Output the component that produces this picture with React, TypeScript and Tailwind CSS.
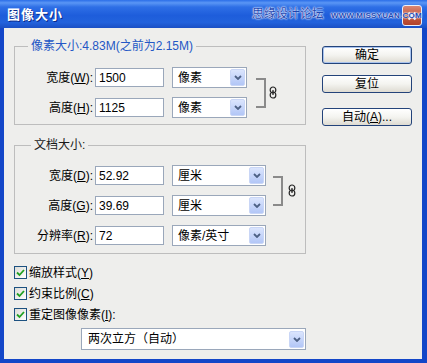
import React from "react";

const FONT = "font-['Liberation_Sans','Noto_Sans_CJK_SC',sans-serif]";

function Chevron() {
  return (
    <svg width="8" height="5" viewBox="0 0 8 5">
      <path d="M1 1 L4 4 L7 1" fill="none" stroke="#4d6185" strokeWidth="1.8" />
    </svg>
  );
}

function Select({ text, className }: { text: string; className: string }) {
  return (
    <div className={"flex items-center bg-white border border-[#9aa7ba] pl-[5px] pr-px " + className}>
      <span className="flex-1 text-[12px] leading-none text-black whitespace-nowrap">{text}</span>
      <span className="w-[15px] h-[17px] rounded-[2px] border border-[#c9d6f6] bg-gradient-to-b from-[#dbe5fd] to-[#b2c6f6] flex items-center justify-center">
        <Chevron />
      </span>
    </div>
  );
}

function Input({ value }: { value: string }) {
  return (
    <div className="w-[69px] h-[19px] bg-white border border-[#9aa7ba] flex items-center pl-[3px] text-[12px] leading-none text-black">
      {value}
    </div>
  );
}

function Row({ label, k, value, unit, selClass }: { label: string; k: string; value: string; unit: string; selClass: string }) {
  return (
    <div className="flex items-center h-[21px]">
      <div className="w-[80px] pr-[2px] text-right text-[12px] leading-none text-black whitespace-nowrap">
        {label}(<u>{k}</u>):
      </div>
      <Input value={value} />
      <Select text={unit} className={selClass} />
    </div>
  );
}

function Chain() {
  return (
    <svg width="8" height="13" viewBox="0 0 8 13">
      <rect x="1.2" y="1" width="5.6" height="6" rx="2.8" fill="none" stroke="#222" strokeWidth="1.2" />
      <rect x="1.2" y="6" width="5.6" height="6" rx="2.8" fill="none" stroke="#222" strokeWidth="1.2" />
      <line x1="4" y1="4" x2="4" y2="9" stroke="#222" strokeWidth="1.2" />
    </svg>
  );
}

function Check({ label, k, suffix }: { label: string; k: string; suffix?: string }) {
  return (
    <div className="flex items-center h-[21px]">
      <span className="w-[13px] h-[13px] border border-[#1c5180] bg-gradient-to-br from-[#dcdcd7] to-white flex items-center justify-center">
        <svg width="9" height="9" viewBox="0 0 9 9">
          <path d="M1 4.5 L3.5 7 L8 2" fill="none" stroke="#21a121" strokeWidth="1.8" />
        </svg>
      </span>
      <span className="ml-[2px] text-[12px] leading-none text-black">
        {label}(<u>{k}</u>){suffix}
      </span>
    </div>
  );
}

function Button({ text, def }: { text: React.ReactNode; def?: boolean }) {
  return (
    <div
      className={
        "h-[18px] w-[90px] rounded-[3px] border border-[#23437a] bg-gradient-to-b from-white via-[#f4f4f0] to-[#dedbd2] flex items-center justify-center text-[12px] leading-none text-black " +
        (def ? "shadow-[inset_0_0_0_1px_#a9c3ee]" : "")
      }
    >
      {text}
    </div>
  );
}

export default function App() {
  return (
    <div className={"w-[427px] h-[363px] flex flex-col bg-[#1346c8] overflow-hidden " + FONT}>
      {/* Title bar */}
      <div className="relative h-[28px] shrink-0 flex items-center pl-[7px] bg-[linear-gradient(to_bottom,#2b6ee8_0%,#5a96f5_10%,#2e6fe6_25%,#1e5ddb_55%,#2262dc_80%,#1a4fc4_100%)]">
        <span className="text-white font-bold text-[13px] tracking-[1px] leading-none [text-shadow:1px_1px_0_#0a2a8a]">图像大小</span>
        <div className="absolute left-[402px] top-[5px] w-[20px] h-[21px] rounded-[3px] border border-white bg-gradient-to-b from-[#ec8a68] via-[#d8582c] to-[#c2401a] flex items-center justify-center opacity-90">
          <svg width="10" height="10" viewBox="0 0 10 10">
            <path d="M1.5 1.5 L8.5 8.5 M8.5 1.5 L1.5 8.5" stroke="white" strokeWidth="2.2" />
          </svg>
        </div>
        <div className="absolute left-[252px] top-[8px] flex items-end whitespace-nowrap">
          <span className="text-[12px] leading-none text-[#1d45b0] [text-shadow:0_0_1px_#ffffff,0_0_2px_#e6efff,0_0_2px_#e6efff]">思缘设计论坛</span>
          <span className="ml-[7px] text-[8px] font-bold leading-none text-[#2148b4] tracking-[0.2px] [text-shadow:0_0_1px_#ffffff,0_0_2px_#e6efff,0_0_2px_#e6efff]">WWW.MISSYUAN.COM</span>
        </div>
      </div>

      {/* Body */}
      <div className="flex-1 ml-[4px] mr-[5px] mb-[4px] bg-[#eeeeec] flex pl-[10px]">
        {/* Left column */}
        <div className="w-[292px] flex flex-col pt-[11px]">
          <fieldset className="border border-[#bdbdbd] px-0 pt-[14px] pb-[6px]">
            <legend className="ml-[13px] px-[3px] text-[12px] leading-[14px] text-[#2457c5]">像素大小:4.83M(之前为2.15M)</legend>
            <div className="flex items-center">
              <div className="flex flex-col gap-[9px]">
                <Row label="宽度" k="W" value="1500" unit="像素" selClass="ml-[8px] w-[75px] h-[21px]" />
                <Row label="高度" k="H" value="1125" unit="像素" selClass="ml-[8px] w-[75px] h-[21px]" />
              </div>
              <div className="ml-[9px] w-[10px] h-[30px] border-y-2 border-r-2 border-[#8a8a8a]" />
              <div className="ml-[3px]">
                <Chain />
              </div>
            </div>
          </fieldset>

          <fieldset className="mt-[13px] border border-[#bdbdbd] px-0 pt-[13px] pb-[7px]">
            <legend className="ml-[16px] px-[3px] text-[12px] leading-[14px] text-[#1a1a1a]">文档大小:</legend>
            <div className="flex flex-col gap-[9px]">
              <div className="flex items-center">
                <div className="flex flex-col gap-[9px]">
                  <Row label="宽度" k="D" value="52.92" unit="厘米" selClass="ml-[8px] w-[94px] h-[21px]" />
                  <Row label="高度" k="G" value="39.69" unit="厘米" selClass="ml-[8px] w-[94px] h-[21px]" />
                </div>
                <div className="ml-[7px] w-[10px] h-[30px] border-y-2 border-r-2 border-[#8a8a8a]" />
                <div className="ml-[5px]">
                  <Chain />
                </div>
              </div>
              <Row label="分辨率" k="R" value="72" unit="像素/英寸" selClass="ml-[8px] w-[94px] h-[21px]" />
            </div>
          </fieldset>

          <div className="mt-[8px] flex flex-col">
            <Check label="缩放样式" k="Y" />
            <Check label="约束比例" k="C" />
            <Check label="重定图像像素" k="I" suffix=":" />
          </div>

          <Select text="两次立方（自动）" className="mt-[3px] ml-[67px] w-[225px] h-[22px] pl-[6px]" />
        </div>

        {/* Right column */}
        <div className="ml-[16px] w-[90px] flex flex-col pt-[18px]">
          <Button text="确定" def />
          <div className="mt-[11px]">
            <Button text="复位" />
          </div>
          <div className="mt-[15px]">
            <Button
              text={
                <span>
                  自动(<u>A</u>)...
                </span>
              }
            />
          </div>
        </div>
      </div>
    </div>
  );
}
